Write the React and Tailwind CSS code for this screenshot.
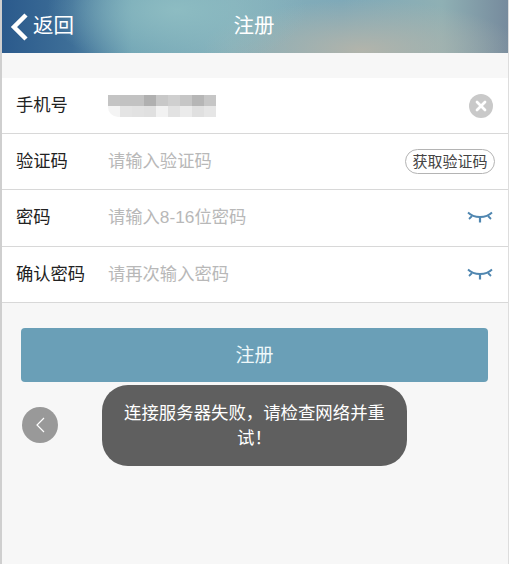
import React from "react";
import { X } from "lucide-react";

const blurTop = ["bg-[#c4c4c4]", "bg-[#c2c2c2]", "bg-[#c2c2c2]", "bg-[#b0b0b0]", "bg-[#c8c8c8]", "bg-[#cfcfcf]", "bg-[#c6c6c6]", "bg-[#b6b6b6]", "bg-[#c6c6c6]"];
const blurBottom = ["bg-[#f4f4f4]", "bg-[#e4e4e4]", "bg-[#e2e2e2]", "bg-[#e0e0e0]", "bg-[#f2f2f2]", "bg-[#e2e2e2]", "bg-[#ebebeb]", "bg-[#e0e0e0]", "bg-[#e6e6e6]"];

const EyeClosed = () => (
  <svg width="26" height="14" viewBox="0 0 26 14" fill="none" stroke="#4f86b0" strokeWidth="1.8">
    <path d="M1 1.5C7 7.5 19 7.5 25 1.5" />
    <path d="M5 5L2 8M21 5L24 8" />
    <path d="M13 6.5V11.5" strokeWidth="2.2" />
  </svg>
);

const Row = ({ label, children, right, className = "h-[56px]" }) => (
  <div className={`flex items-center border-b border-[#d8d8d8] pl-[14px] pr-[15px] ${className}`}>
    <span className="w-[92px] text-[17.3px] text-[#222222]">{label}</span>
    <div className="flex-1 text-[17.3px] text-[#b8b8b8]">{children}</div>
    {right}
  </div>
);

export default function App() {
  return (
    <div className="relative h-[564px] w-[509px] overflow-hidden border-l-2 border-r border-l-[#cfcfcf] border-r-[#dddddd] bg-[#f7f7f7] font-['Liberation_Sans','Noto_Sans_CJK_SC',sans-serif]">
      <header className="flex h-[53px] items-center bg-[radial-gradient(ellipse_130px_60px_at_175px_10px,#8dbcc2,transparent),radial-gradient(ellipse_160px_50px_at_360px_50px,#b2b4ab,transparent),linear-gradient(90deg,#2b5a8c_0px,#3e6f98_70px,#6fa3b4_130px,#84b0bb_230px,#7fa9b8_340px,#8fb0b4_440px,#75899c_509px)] text-white">
        <div className="flex w-[140px] items-center pl-[8px]">
          <svg width="18" height="28" viewBox="0 0 18 28" fill="none" stroke="white" strokeWidth="4.5">
            <path d="M16 2L4 14L16 26" />
          </svg>
          <span className="ml-[5px] text-[20.5px]">返回</span>
        </div>
        <h1 className="flex-1 pr-[142px] text-center text-[20.5px] font-normal">注册</h1>
      </header>

      <div className="mt-[25px] bg-white">
        <Row
          label="手机号"
          right={
            <span className="flex h-[24px] w-[24px] items-center justify-center rounded-full bg-[#c9c9c9]">
              <X size={16} strokeWidth={4} className="text-white" />
            </span>
          }
        >
          <div className="w-[108px] overflow-hidden rounded-bl-[10px]">
            <div className="flex h-[11px]">
              {blurTop.map((c, i) => (
                <div key={i} className={`w-[12px] ${c}`} />
              ))}
            </div>
            <div className="flex h-[11px]">
              {blurBottom.map((c, i) => (
                <div key={i} className={`w-[12px] ${c}`} />
              ))}
            </div>
          </div>
        </Row>
        <Row
          label="验证码"
          right={
            <button className="-mr-[2px] h-[25px] w-[90px] rounded-full border border-[#b4b4b4] text-center text-[15px] leading-[23px] text-[#444444]">
              获取验证码
            </button>
          }
        >
          请输入验证码
        </Row>
        <Row label="密码" right={<EyeClosed />} className="h-[57px]">
          请输入8-16位密码
        </Row>
        <Row label="确认密码" right={<EyeClosed />}>
          请再次输入密码
        </Row>
      </div>

      <div className="mt-[25px] px-[19px]">
        <button className="h-[54px] w-[467px] rounded-[4px] bg-[#6a9fb7] pt-[2px] text-[19px] text-[#eef8fa]">注册</button>
        <div className="ml-[1px] mt-[25px] flex h-[36px] w-[36px] items-center justify-center rounded-full bg-[#999999]">
          <svg width="10" height="16" viewBox="0 0 10 16" fill="none" stroke="white" strokeWidth="1.2">
            <path d="M9 1L2 8L9 15" />
          </svg>
        </div>
      </div>

      <div className="absolute left-[100px] top-[385px] flex h-[81px] w-[305px] flex-col justify-center rounded-[26px] bg-[#5f5f5f] px-[19px] text-center text-[17.4px] leading-[25px] text-white">
        连接服务器失败，请检查网络并重试！
      </div>
    </div>
  );
}
